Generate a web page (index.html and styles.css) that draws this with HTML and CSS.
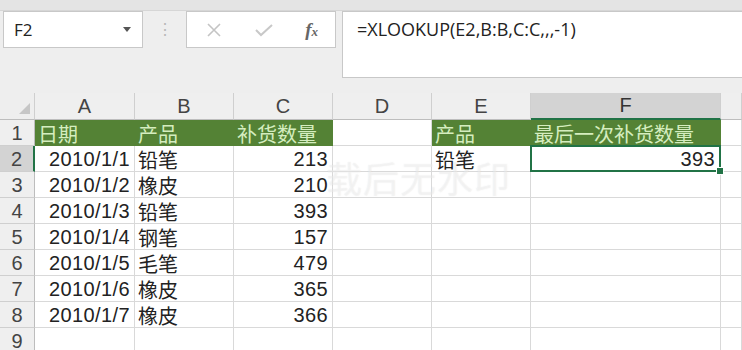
FILE: index.html
```html
<!DOCTYPE html>
<html lang="zh-CN">
<head>
    <meta charset="UTF-8">
    <title>XLOOKUP</title>
    <link rel="stylesheet" href="styles.css">
</head>
<body>
    <div class="top-strip"></div>

    <div class="toolbar">
        <div class="name-box">
            <span>F2</span>
            <span class="drop"></span>
        </div>
        <div class="grip">⋮</div>
        <div class="buttons">
            <svg width="16" height="16" viewBox="0 0 16 16"><path d="M2 2L14 14M14 2L2 14" stroke="#c4c4c4" stroke-width="1.6" fill="none"/></svg>
            <svg width="20" height="16" viewBox="0 0 20 16"><path d="M2 8L7 13L18 3" stroke="#c8c8c8" stroke-width="2" fill="none"/></svg>
            <span class="fx">f<small>x</small></span>
        </div>
        <div class="formula">=XLOOKUP(E2,B:B,C:C,,,-1)</div>
    </div>

    <div class="sheet">
        <div class="corner"><span class="tri"></span></div>
        <div class="col-h">A</div>
        <div class="col-h">B</div>
        <div class="col-h">C</div>
        <div class="col-h">D</div>
        <div class="col-h">E</div>
        <div class="col-h active">F</div>
        <div class="col-h"></div>

        <div class="row-h">1</div>
        <div class="cell head">日期</div>
        <div class="cell head">产品</div>
        <div class="cell head">补货数量</div>
        <div class="cell"></div>
        <div class="cell head">产品</div>
        <div class="cell head">最后一次补货数量</div>
        <div class="cell"></div>

        <div class="row-h active">2</div>
        <div class="cell num">2010/1/1</div>
        <div class="cell">铅笔</div>
        <div class="cell num">213</div>
        <div class="cell"></div>
        <div class="cell">铅笔</div>
        <div class="cell num selected">393<span class="handle"></span></div>
        <div class="cell"></div>

        <div class="row-h">3</div>
        <div class="cell num">2010/1/2</div>
        <div class="cell">橡皮</div>
        <div class="cell num">210</div>
        <div class="cell"></div>
        <div class="cell"></div>
        <div class="cell"></div>
        <div class="cell"></div>

        <div class="row-h">4</div>
        <div class="cell num">2010/1/3</div>
        <div class="cell">铅笔</div>
        <div class="cell num">393</div>
        <div class="cell"></div>
        <div class="cell"></div>
        <div class="cell"></div>
        <div class="cell"></div>

        <div class="row-h">5</div>
        <div class="cell num">2010/1/4</div>
        <div class="cell">钢笔</div>
        <div class="cell num">157</div>
        <div class="cell"></div>
        <div class="cell"></div>
        <div class="cell"></div>
        <div class="cell"></div>

        <div class="row-h">6</div>
        <div class="cell num">2010/1/5</div>
        <div class="cell">毛笔</div>
        <div class="cell num">479</div>
        <div class="cell"></div>
        <div class="cell"></div>
        <div class="cell"></div>
        <div class="cell"></div>

        <div class="row-h">7</div>
        <div class="cell num">2010/1/6</div>
        <div class="cell">橡皮</div>
        <div class="cell num">365</div>
        <div class="cell"></div>
        <div class="cell"></div>
        <div class="cell"></div>
        <div class="cell"></div>

        <div class="row-h">8</div>
        <div class="cell num">2010/1/7</div>
        <div class="cell">橡皮</div>
        <div class="cell num">366</div>
        <div class="cell"></div>
        <div class="cell"></div>
        <div class="cell"></div>
        <div class="cell"></div>

        <div class="row-h">9</div>
        <div class="cell"></div>
        <div class="cell"></div>
        <div class="cell"></div>
        <div class="cell"></div>
        <div class="cell"></div>
        <div class="cell"></div>
        <div class="cell"></div>

        <div class="watermark">载后无水印</div>
    </div>
</body>
</html>
```

FILE: styles.css
```css
body {
    margin: 0;
    width: 742px;
    height: 350px;
    overflow: hidden;
    background-color: #eeeeee;
    font-family: "Liberation Sans", "Noto Sans CJK SC", sans-serif;
    color: #333;
}
.top-strip {
    height: 10px;
    background-color: #e4e4e4;
    border-bottom: 1px solid #d6d6d6;
}
.toolbar {
    display: flex;
    align-items: flex-start;
    height: 82px;
}
.name-box {
    box-sizing: border-box;
    margin-left: 3px;
    width: 140px;
    height: 37px;
    background: white;
    border: 1px solid #c8c8c8;
    display: flex;
    align-items: center;
    justify-content: space-between;
    padding: 0 11px 0 10px;
    font-family: "Open Sans", "Noto Sans", sans-serif;
    font-size: 17px;
    color: #222;
}
.drop {
    width: 0;
    height: 0;
    border-left: 4px solid transparent;
    border-right: 4px solid transparent;
    border-top: 5px solid #555;
}
.grip {
    width: 43px;
    text-align: center;
    color: #b8b8b8;
    font-size: 16px;
    line-height: 37px;
}
.buttons {
    box-sizing: border-box;
    width: 150px;
    height: 37px;
    background: white;
    border: 1px solid #c8c8c8;
    display: flex;
    align-items: center;
    justify-content: space-between;
    padding: 0 17px 0 19px;
}
.fx {
    font-family: "Liberation Serif", serif;
    font-style: italic;
    font-weight: bold;
    font-size: 19px;
    color: #666;
}
.fx small {
    font-size: 13px;
}
.formula {
    box-sizing: border-box;
    margin-left: 6px;
    flex: 1;
    height: 67px;
    background: white;
    border: 1px solid #c8c8c8;
    border-right: none;
    padding: 5px 0 0 14px;
    font-family: "Open Sans", "Noto Sans", sans-serif;
    font-size: 18px;
    color: #222;
}
.sheet {
    position: relative;
    display: grid;
    grid-template-columns: 35px 100px 99px 99px 99px 99px 190px 1fr;
    grid-template-rows: 27px repeat(9, 26px);
    background: white;
    font-size: 20px;
}
.corner, .col-h, .row-h {
    box-sizing: border-box;
    background-color: #efefef;
    border-right: 1px solid #cfcfcf;
    border-bottom: 1px solid #bdbdbd;
    color: #444;
    display: flex;
    align-items: center;
    justify-content: center;
}
.corner {
    background-color: #eeeeee;
    justify-content: flex-end;
    align-items: flex-end;
    padding: 0 4px 5px 0;
}
.tri {
    width: 0;
    height: 0;
    border-left: 11px solid transparent;
    border-bottom: 11px solid #c6c6c6;
}
.col-h.active {
    background-color: #d3d3d3;
    border-bottom: 2px solid #217346;
    color: #333;
}
.row-h {
    border-bottom: 1px solid #cfcfcf;
    border-right: 1px solid #bdbdbd;
    padding-top: 2px;
}
.row-h.active {
    background-color: #d3d3d3;
    border-right: 2px solid #217346;
}
.cell {
    box-sizing: border-box;
    border-right: 1px solid #d9d9d9;
    border-bottom: 1px solid #d9d9d9;
    padding: 2px 4px 0 3px;
    display: flex;
    align-items: center;
    white-space: nowrap;
    color: #222;
}
.num {
    justify-content: flex-end;
    letter-spacing: 0.4px;
}
.head {
    background-color: #548235;
    border-right-color: #548235;
    border-bottom-color: #548235;
    color: #d5edbf;
}
.selected {
    position: relative;
    border: 2px solid #217346;
    margin: -1px 0 0 -1px;
}
.handle {
    position: absolute;
    right: -5px;
    bottom: -5px;
    width: 6px;
    height: 6px;
    background: #217346;
    border: 1px solid white;
}
.watermark {
    position: absolute;
    left: 326px;
    top: 58px;
    font-size: 36px;
    color: rgba(255, 255, 255, 0.4);
    text-shadow: 0 0 1px rgba(170, 170, 170, 0.25);
    letter-spacing: 1px;
    pointer-events: none;
}
```
